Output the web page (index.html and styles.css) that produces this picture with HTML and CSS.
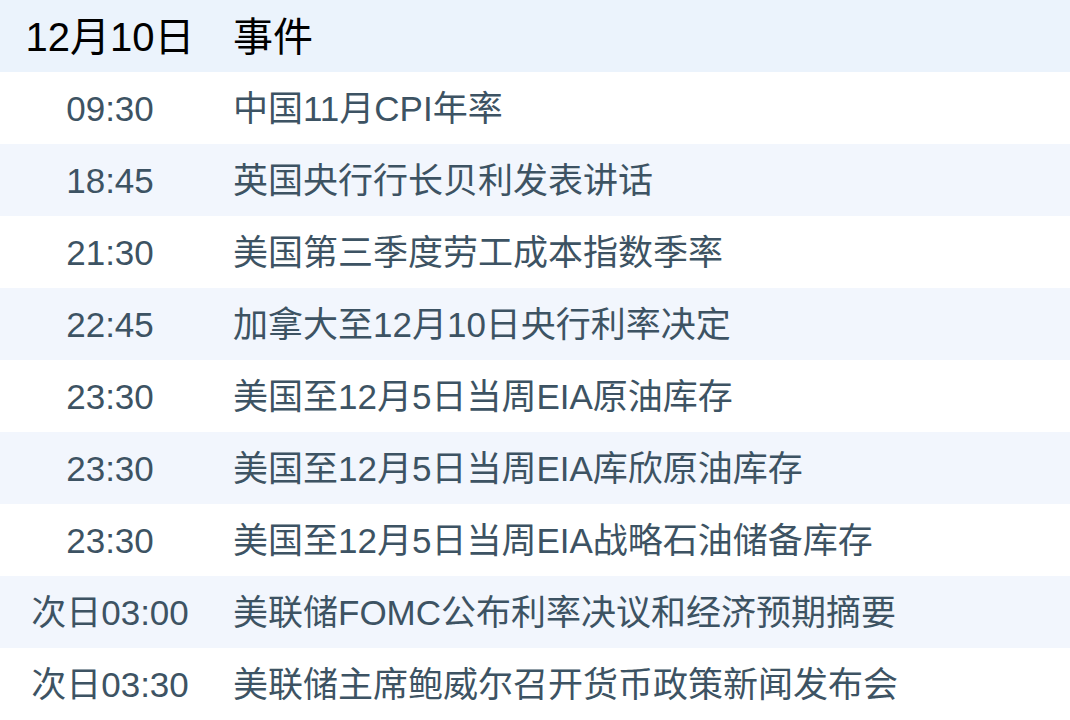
FILE: index.html
```html
<!DOCTYPE html>
<html lang="zh-CN">
<head>
<meta charset="utf-8">
<link rel="stylesheet" href="styles.css">
</head>
<body>
<div class="table">
  <div class="row head">
    <div class="time">12月10日</div>
    <div class="event">事件</div>
  </div>
  <div class="row">
    <div class="time">09:30</div>
    <div class="event">中国11月CPI年率</div>
  </div>
  <div class="row alt">
    <div class="time">18:45</div>
    <div class="event">英国央行行长贝利发表讲话</div>
  </div>
  <div class="row">
    <div class="time">21:30</div>
    <div class="event">美国第三季度劳工成本指数季率</div>
  </div>
  <div class="row alt">
    <div class="time">22:45</div>
    <div class="event">加拿大至12月10日央行利率决定</div>
  </div>
  <div class="row">
    <div class="time">23:30</div>
    <div class="event">美国至12月5日当周EIA原油库存</div>
  </div>
  <div class="row alt">
    <div class="time">23:30</div>
    <div class="event">美国至12月5日当周EIA库欣原油库存</div>
  </div>
  <div class="row">
    <div class="time">23:30</div>
    <div class="event">美国至12月5日当周EIA战略石油储备库存</div>
  </div>
  <div class="row alt">
    <div class="time">次日03:00</div>
    <div class="event">美联储FOMC公布利率决议和经济预期摘要</div>
  </div>
  <div class="row">
    <div class="time">次日03:30</div>
    <div class="event">美联储主席鲍威尔召开货币政策新闻发布会</div>
  </div>
</div>
</body>
</html>
```

FILE: styles.css
```css
html, body {
  margin: 0;
  padding: 0;
  background: #ffffff;
}
.table {
  width: 1070px;
  display: flex;
  flex-direction: column;
  font-family: "Liberation Sans", Arial, "Noto Sans CJK SC", sans-serif;
}
.row {
  box-sizing: border-box;
  height: 72px;
  padding-top: 1px;
  line-height: 71px;
  display: flex;
  align-items: flex-start;
  background: #ffffff;
  color: #3d5363;
  font-size: 35px;
}
.row.alt {
  background: #f2f6fd;
}
.row.head {
  padding-top: 2px;
  line-height: 70px;
  background: #ebf3fc;
  color: #000000;
  font-size: 40px;
}
.time {
  width: 220px;
  text-align: center;
  white-space: nowrap;
}
.event {
  padding-left: 13px;
  white-space: nowrap;
}
```
